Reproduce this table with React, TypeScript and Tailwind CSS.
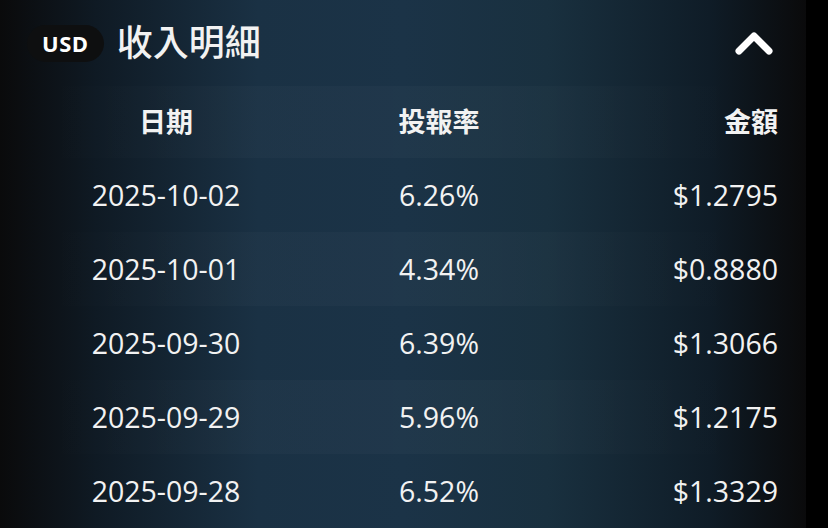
const rows = [
  { date: '2025-10-02', rate: '6.26%', amount: '$1.2795' },
  { date: '2025-10-01', rate: '4.34%', amount: '$0.8880' },
  { date: '2025-09-30', rate: '6.39%', amount: '$1.3066' },
  { date: '2025-09-29', rate: '5.96%', amount: '$1.2175' },
  { date: '2025-09-28', rate: '6.52%', amount: '$1.3329' },
];

const stripe =
  'bg-[linear-gradient(90deg,transparent_5%,rgba(255,255,255,0.02)_30%,rgba(255,255,255,0.025)_60%,transparent_92%)]';

function App() {
  return (
    <div
      className="flex h-[528px] w-[828px] bg-black text-[#f2f2f2]"
      style={{ fontFamily: '"Open Sans", "Noto Sans CJK TC", sans-serif' }}
    >
      <div className="flex h-full w-[806px] flex-col bg-[linear-gradient(90deg,#0a0a0b_0%,#0f1a24_12%,#1a3144_32%,#1b3347_50%,#19303f_68%,#0f1c27_88%,#0a0a0b_100%)]">
        <div className="flex h-[86px] items-center pl-[27px] pr-[33px]">
          <span className="flex h-[37px] items-center rounded-full bg-[#0e0f10] px-[15px] text-[22px] font-bold tracking-wide text-white">
            USD
          </span>
          <h1 className="ml-[13px] text-[36px] font-medium leading-none">收入明細</h1>
          <svg className="ml-auto" width="38" height="26" viewBox="0 0 38 26" fill="none">
            <polyline
              points="4,21 19,6 34,21"
              stroke="#ffffff"
              strokeWidth="7"
              strokeLinecap="round"
              strokeLinejoin="round"
            />
          </svg>
        </div>

        <div className={`grid h-[72px] grid-cols-[276px_270px_1fr] items-center px-[28px] text-[27px] font-semibold ${stripe}`}>
          <span className="text-center">日期</span>
          <span className="text-center">投報率</span>
          <span className="text-right">金額</span>
        </div>

        {rows.map((r, i) => (
          <div
            key={r.date}
            className={`grid h-[74px] grid-cols-[276px_270px_1fr] items-center px-[28px] text-[28.5px] ${i % 2 === 1 ? stripe : ''}`}
          >
            <span className="text-center">{r.date}</span>
            <span className="text-center">{r.rate}</span>
            <span className="text-right">{r.amount}</span>
          </div>
        ))}
      </div>
    </div>
  );
}

export default App;
